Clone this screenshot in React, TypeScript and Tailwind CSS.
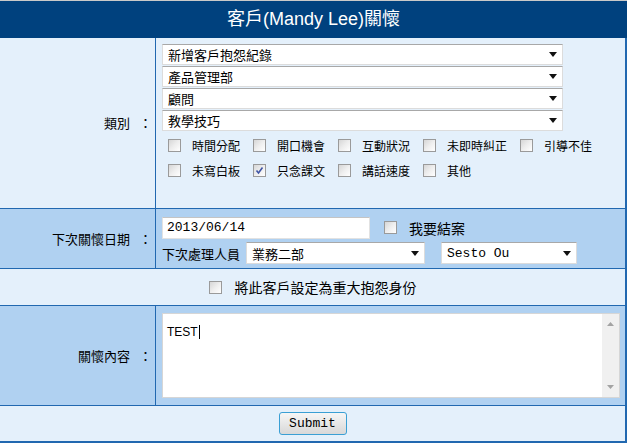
import React from "react";

const CJK = "font-['Noto_Sans_CJK_TC','Noto_Sans_CJK_SC',sans-serif]";
const MONO = "font-['Liberation_Mono','Courier_New',monospace]";

function Arrow() {
  return (
    <svg width="8" height="5" viewBox="0 0 8 5" className="shrink-0" aria-hidden="true">
      <path d="M0 0H8L4 5Z" fill="#111" />
    </svg>
  );
}

function FakeSelect({ value, className, mono }: { value: string; className: string; mono?: boolean }) {
  return (
    <div
      className={`flex items-center justify-between bg-white border border-[#dcdcdc] border-t-[#a8a8a8] pr-[5px] ${className}`}
    >
      <span className={`pl-[5px] leading-none text-black ${mono ? `${MONO} text-[13px]` : `${CJK} text-[13px]`}`}>
        {value}
      </span>
      <Arrow />
    </div>
  );
}

function Box({ checked }: { checked?: boolean }) {
  return (
    <span className="inline-flex h-[13px] w-[13px] shrink-0 items-center justify-center border border-[#9a9a9a] bg-linear-to-br from-[#d6d6d6] via-[#eeeeee] to-[#ffffff]">
      {checked && (
        <svg width="9" height="9" viewBox="0 0 9 9" aria-hidden="true">
          <path d="M1.5 4.5L3.5 7L7.5 1.5" stroke="#3f55a5" strokeWidth="1.6" fill="none" />
        </svg>
      )}
    </span>
  );
}

function CheckItem({ label, checked }: { label: string; checked?: boolean }) {
  return (
    <div className="flex items-center mr-[13px]">
      <Box checked={checked} />
      <span className={`ml-[11px] text-[12px] leading-none text-black ${CJK}`}>{label}</span>
    </div>
  );
}

function Label({ text }: { text: string }) {
  return (
    <div className={`w-[156px] shrink-0 border-r border-[#2168b0] flex items-center justify-end pr-[3px] text-[13px] text-black ${CJK}`}>
      <span>{text}</span>
      <span className="ml-[9px]">：</span>
    </div>
  );
}

export default function App() {
  const row1 = ["時間分配", "開口機會", "互動狀況", "未即時糾正", "引導不佳"];
  const row2 = ["未寫白板", "只念課文", "講話速度", "其他"];

  return (
    <div className="h-[445px] w-[629px] bg-white overflow-hidden">
      <div className="w-[627px] border-t border-[#c9c9c9]">
        <div className="flex h-[37px] items-center justify-center bg-[#00417e] text-[18px] text-white font-['Liberation_Sans','Noto_Sans_CJK_TC',sans-serif]">
          客戶(Mandy Lee)關懷
        </div>

        <div className="border-r-2 border-b-2 border-[#2168b0]">
          {/* 類別 */}
          <div className="flex h-[171px] border-b border-[#2168b0] bg-[#e4f0fb]">
            <Label text="類別" />
            <div className="flex flex-col pl-[6px] pt-[6px]">
              <FakeSelect value="新增客戶抱怨紀錄" className="h-[21px] w-[401px] mb-[1px]" />
              <FakeSelect value="產品管理部" className="h-[21px] w-[401px] mb-[1px]" />
              <FakeSelect value="顧問" className="h-[21px] w-[401px] mb-[1px]" />
              <FakeSelect value="教學技巧" className="h-[21px] w-[401px] mb-[1px]" />
              <div className="flex h-[25px] items-center pl-[6px] mt-[1px]">
                {row1.map((l) => (
                  <CheckItem key={l} label={l} />
                ))}
              </div>
              <div className="flex h-[25px] items-center pl-[6px]">
                {row2.map((l) => (
                  <CheckItem key={l} label={l} checked={l === "只念課文"} />
                ))}
              </div>
            </div>
          </div>

          {/* 下次關懷日期 */}
          <div className="flex h-[60px] border-b border-[#2168b0] bg-[#b0d1f1]">
            <Label text="下次關懷日期" />
            <div className="flex flex-col pl-[6px] pt-[7px]">
              <div className="flex items-center">
                <div className={`flex h-[22px] w-[208px] items-center bg-white border border-[#e2e2e2] border-t-[#c4c4c4] pl-[4px] text-[13px] text-black ${MONO}`}>
                  2013/06/14
                </div>
                <span className="ml-[14px]">
                  <Box />
                </span>
                <span className={`ml-[12px] text-[14px] leading-none text-black ${CJK}`}>我要結案</span>
              </div>
              <div className="mt-[2px] flex items-center">
                <span className={`text-[13px] leading-none text-black ${CJK}`}>下次處理人員</span>
                <FakeSelect value="業務二部" className="ml-[6px] h-[22px] w-[179px]" />
                <FakeSelect value="Sesto Ou" mono className="ml-[16px] h-[22px] w-[136px]" />
              </div>
            </div>
          </div>

          {/* 重大抱怨 */}
          <div className="flex h-[37px] items-center justify-center border-b border-[#2168b0] bg-[#e4f0fb]">
            <Box />
            <span className={`ml-[13px] text-[14px] leading-none text-black ${CJK}`}>將此客戶設定為重大抱怨身份</span>
          </div>

          {/* 關懷內容 */}
          <div className="flex h-[100px] border-b border-[#2168b0] bg-[#b0d1f1]">
            <Label text="關懷內容" />
            <div className="pl-[6px] pt-[7px]">
              <div className="flex h-[85px] w-[458px] bg-white border border-[#d6d6d6]">
                <div className="flex-1 pl-[4px] pt-[4px]">
                  <span className="text-[12px] leading-none text-black font-['Liberation_Sans',sans-serif]">TEST</span>
                  <span className="ml-px inline-block h-[14px] w-px bg-black align-middle" />
                </div>
                <div className="flex w-[17px] flex-col items-center justify-between bg-[#f0f0f0] py-[8px]">
                  <svg width="7" height="4" viewBox="0 0 7 4" aria-hidden="true">
                    <path d="M0 4H7L3.5 0Z" fill="#a3a3a3" />
                  </svg>
                  <svg width="7" height="4" viewBox="0 0 7 4" aria-hidden="true">
                    <path d="M0 0H7L3.5 4Z" fill="#a3a3a3" />
                  </svg>
                </div>
              </div>
            </div>
          </div>

          {/* submit */}
          <div className="flex h-[35px] items-center justify-center bg-[#e4f0fb]">
            <button
              type="button"
              className={`h-[23px] w-[68px] rounded-[3px] border border-[#3a9fd4] bg-linear-to-b from-[#f6f6f6] to-[#d8d8d8] text-[13px] text-black ${MONO}`}
            >
              Submit
            </button>
          </div>
        </div>
      </div>
    </div>
  );
}
